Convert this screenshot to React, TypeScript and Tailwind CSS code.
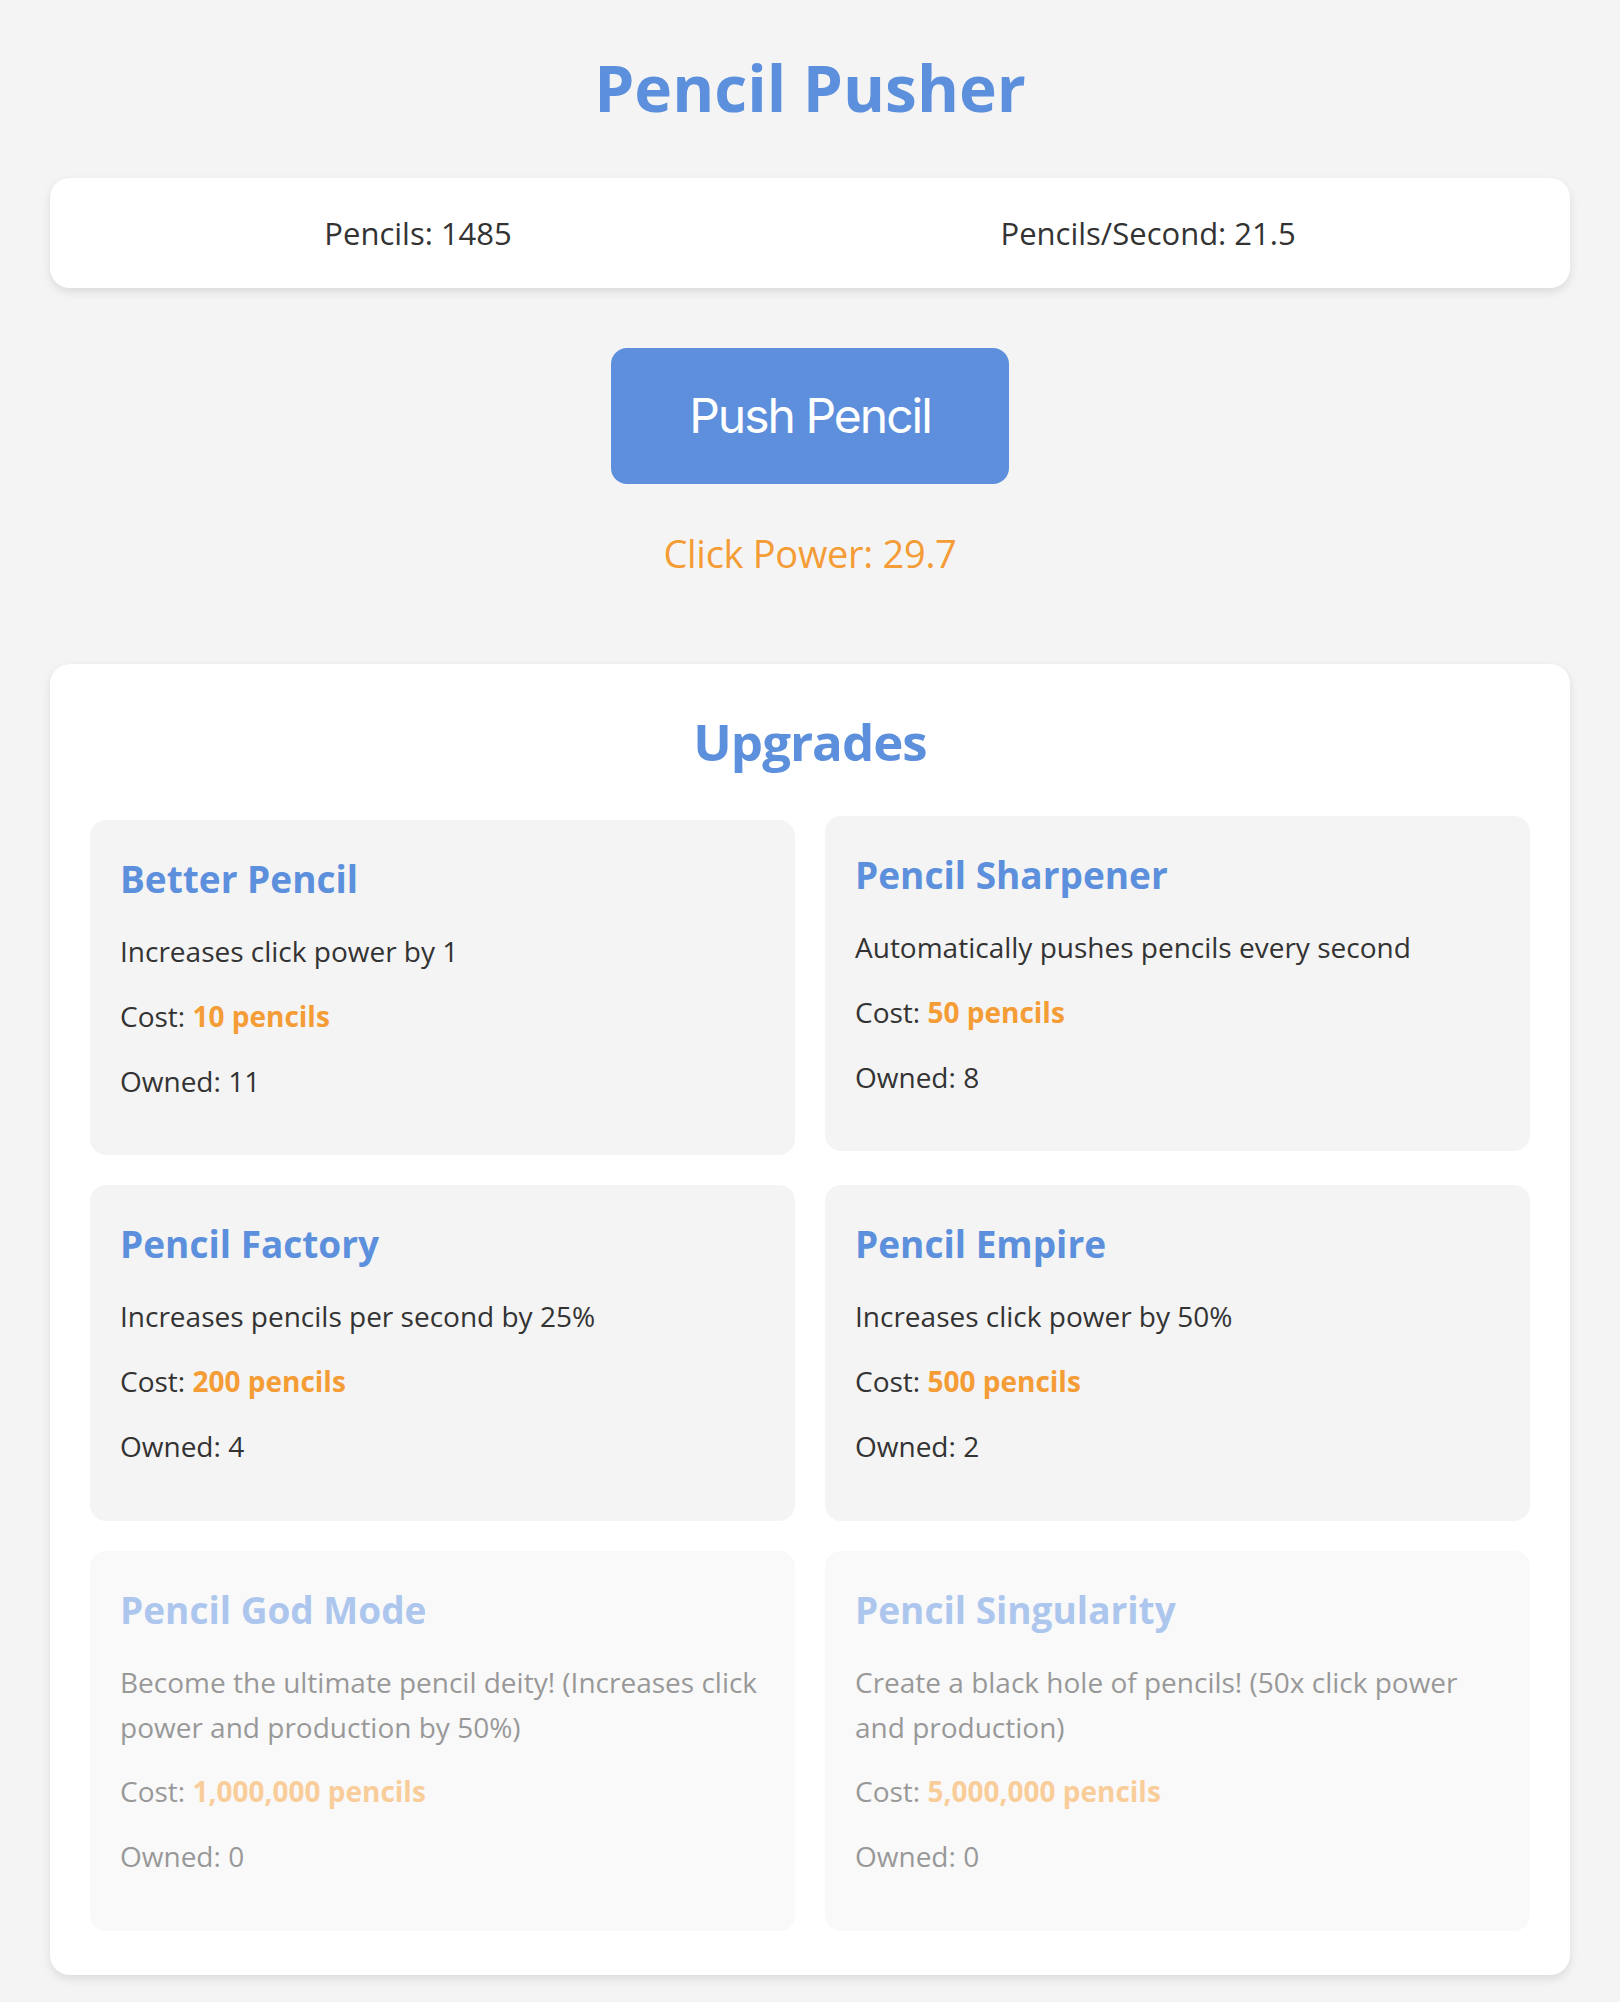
import React from "react";

type Upgrade = {
  name: string;
  description: string;
  cost: string;
  owned: number;
  locked?: boolean;
  hovered?: boolean;
};

const upgrades: Upgrade[] = [
  { name: "Better Pencil", description: "Increases click power by 1", cost: "10", owned: 11 },
  {
    name: "Pencil Sharpener",
    description: "Automatically pushes pencils every second",
    cost: "50",
    owned: 8,
    hovered: true,
  },
  { name: "Pencil Factory", description: "Increases pencils per second by 25%", cost: "200", owned: 4 },
  { name: "Pencil Empire", description: "Increases click power by 50%", cost: "500", owned: 2 },
  {
    name: "Pencil God Mode",
    description: "Become the ultimate pencil deity! (Increases click power and production by 50%)",
    cost: "1,000,000",
    owned: 0,
    locked: true,
  },
  {
    name: "Pencil Singularity",
    description: "Create a black hole of pencils! (50x click power and production)",
    cost: "5,000,000",
    owned: 0,
    locked: true,
  },
];

function UpgradeCard({ upgrade }: { upgrade: Upgrade }) {
  return (
    <div
      className={`rounded-2xl bg-[#f4f4f4] px-[30px] pt-[29px] pb-[52px] ${
        upgrade.locked ? "opacity-50" : ""
      } ${upgrade.hovered ? "-translate-y-1" : ""}`}
    >
      <h3 className="text-[37px] font-bold leading-[60px] text-[#5c8fdc]">{upgrade.name}</h3>
      <p className="mt-[20px] text-[28px] leading-[44.8px]">{upgrade.description}</p>
      <p className="mt-[20px] text-[28px] leading-[44.8px]">
        Cost: <span className="font-bold text-[#f49c35]">{upgrade.cost} pencils</span>
      </p>
      <p className="mt-[20px] text-[28px] leading-[44.8px]">Owned: {upgrade.owned}</p>
    </div>
  );
}

export default function App() {
  return (
    <div className="min-h-screen bg-[#f4f4f4] px-[50px] pb-[28px] font-['Open_Sans',sans-serif] text-[#333]">
      <h1 className="pt-[49px] text-center text-[64px] font-bold leading-[77px] text-[#5c8fdc]">
        Pencil Pusher
      </h1>

      <div className="mt-[52px] flex justify-around rounded-[20px] bg-white px-[30px] py-[36px] text-[31px] leading-[38px] shadow-[0_4px_10px_rgba(0,0,0,0.1)]">
        <div>Pencils: 1485</div>
        <div>Pencils/Second: 21.5</div>
      </div>

      <div className="mt-[60px] flex justify-center">
        <button className="flex h-[136px] w-[398px] items-center justify-center rounded-2xl bg-[#5d8fdc] font-['Inter',sans-serif] text-[48px] leading-[58px] tracking-[-2px] text-white">
          Push Pencil
        </button>
      </div>

      <div className="mt-[46px] text-center text-[38px] leading-[47px] tracking-[-0.3px] text-[#f49c35]">
        Click Power: 29.7
      </div>

      <div className="mt-[87px] rounded-[20px] bg-white px-[40px] pt-[47px] pb-[44px] shadow-[0_4px_10px_rgba(0,0,0,0.1)]">
        <h2 className="mb-[49px] text-center text-[51px] font-bold leading-[60px] tracking-[-1px] text-[#5c8fdc]">
          Upgrades
        </h2>
        <div className="grid grid-cols-2 gap-[30px]">
          {upgrades.map((u) => (
            <UpgradeCard key={u.name} upgrade={u} />
          ))}
        </div>
      </div>
    </div>
  );
}
